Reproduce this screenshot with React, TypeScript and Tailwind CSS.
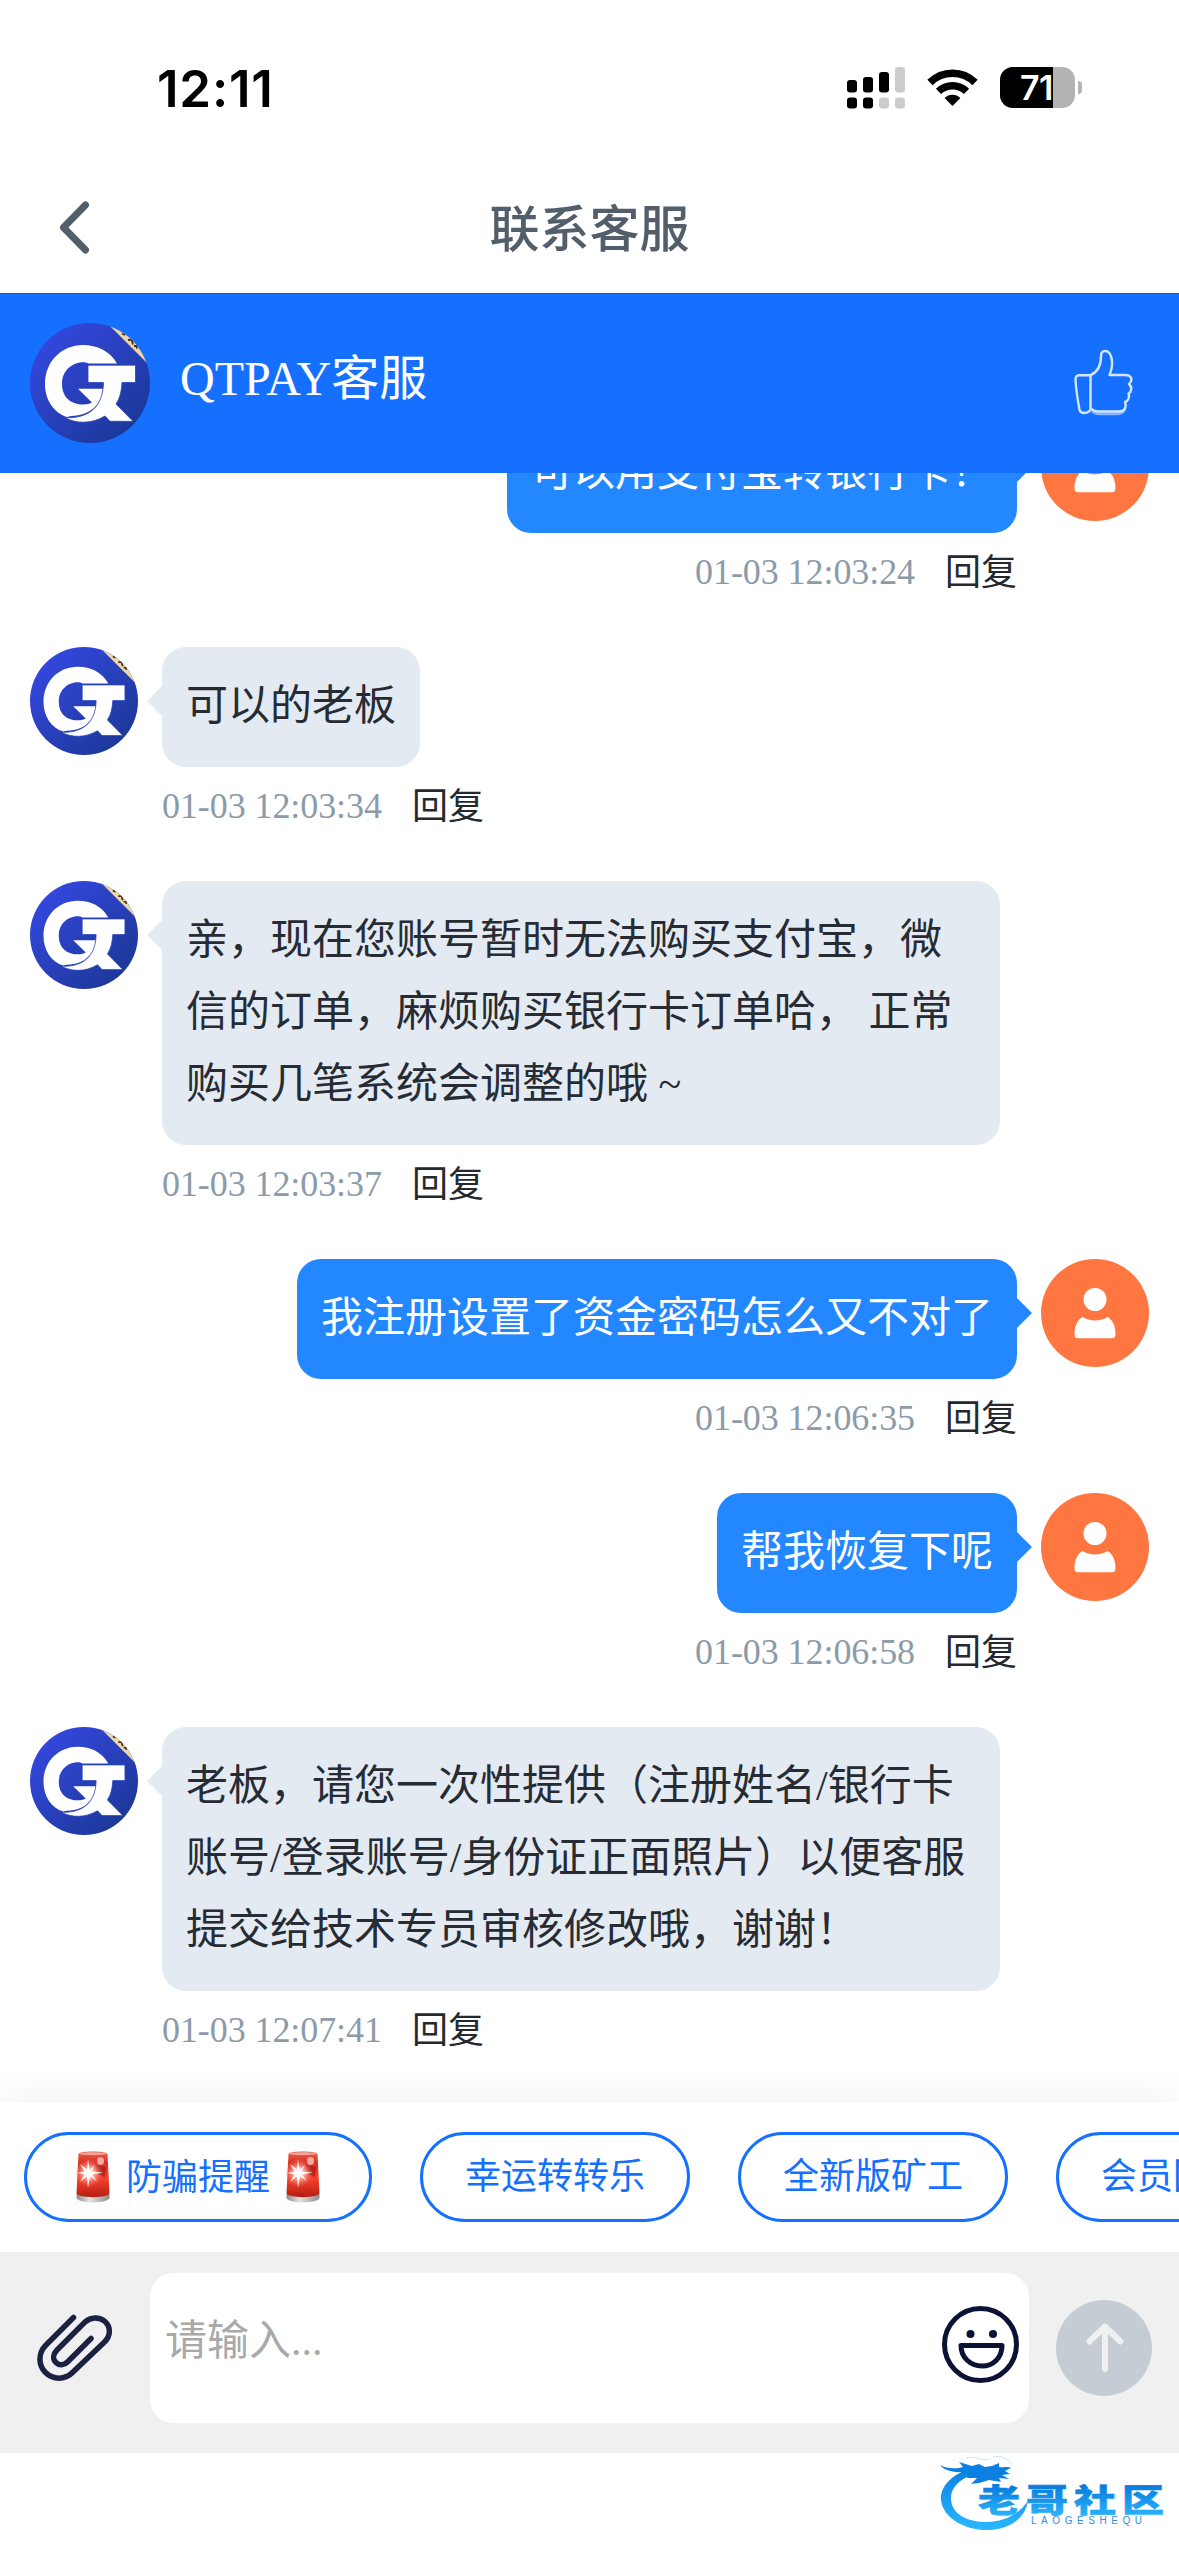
import React from "react";

const SERIF = "font-['Liberation_Serif','Noto_Sans_CJK_SC',serif]";

function SignalIcon() {
  return (
    <svg width="58" height="42" viewBox="0 0 58 42">
      <g fill="#000">
        <rect x="0" y="13" width="10" height="12.5" rx="3" />
        <rect x="16" y="10" width="10" height="15.5" rx="3" />
        <rect x="32" y="5" width="10" height="20.5" rx="3" />
        <rect x="0" y="30.5" width="10" height="11" rx="3" />
        <rect x="16" y="30.5" width="10" height="11" rx="3" />
      </g>
      <g fill="#cccccc">
        <rect x="48" y="0" width="10" height="25.5" rx="3" />
        <rect x="32" y="30.5" width="10" height="11" rx="3" />
        <rect x="48" y="30.5" width="10" height="11" rx="3" />
      </g>
    </svg>
  );
}

function WifiIcon() {
  return (
    <svg width="51" height="38" viewBox="0 0 51 38" fill="none">
      <path d="M3 13.5 A32 32 0 0 1 48 13.500" stroke="#000" strokeWidth="7.600" />
      <path d="M11.500 22.400 A20 20 0 0 1 39.500 22.400" stroke="#000" strokeWidth="7.400" />
      <path d="M25.500 37 L17.600 29 A11 11 0 0 1 33.400 29 Z" fill="#000" />
    </svg>
  );
}

function Battery() {
  return (
    <div className="flex items-center gap-[3px]">
      <div className="flex h-[41px] w-[75px] overflow-hidden rounded-[13px] bg-[#b3b3b3]">
        <div className="flex w-[53px] items-center justify-end bg-black font-['Inter',sans-serif] text-[34px] leading-none font-semibold tracking-[-0.5px] text-white">
          71
        </div>
      </div>
      <div className="h-[13px] w-[4px] rounded-r-full bg-[#b3b3b3]" />
    </div>
  );
}

function BrandAvatar({ id, className }: { id: string; className: string }) {
  return (
    <svg viewBox="0 0 120 120" className={className}>
      <defs>
        <linearGradient id={id + "g"} x1="0.1" y1="0.1" x2="0.85" y2="0.9">
          <stop offset="0" stopColor="#3448e0" />
          <stop offset="1" stopColor="#1c3898" />
        </linearGradient>
        <clipPath id={id + "c"}>
          <circle cx="60" cy="60" r="60" />
        </clipPath>
      </defs>
      <g clipPath={`url(#${id}c)`}>
        <rect width="120" height="120" fill={`url(#${id}g)`} />
        <path d="M80 3 L117 40 L122 38 L110 0 L80 -4 Z" fill="#ecd6a4" />
        <path d="M92 10.500 l3 1.500 M98 17 l3.500 -0.500 l1.500 5 M104 23 l2.500 0 l0.500 2.500" stroke="#4a2d16" strokeWidth="1.800" fill="none" />
        <path
          d="M87 40.500 H58.500 C51 36.500 32 42 32 61 C32 75 42 81.500 53 81.500 C57 81.500 60 80.500 62 79.500 L48 65.800 H73 C72 80 62 92.500 41 93 L37 94 C24 90 15 77 15 61 C15 38 32 22 53 22 C67 22 80 28 87 40.500 Z"
          fill="#fff"
        />
        <path
          d="M58 42.200 H105.500 V59.500 H92 C91.500 68 90 75 86 81 L103 98.300 H80 L75 93 C61 101.500 46 100.500 35 94.800 C59 95.500 73 84 73.500 59.500 H58 Z"
          fill="#fff"
          stroke="#2841be"
          strokeWidth="0.800"
        />
      </g>
    </svg>
  );
}

function UserAvatar() {
  return (
    <svg viewBox="0 0 108 108" className="h-[108px] w-[108px] shrink-0">
      <circle cx="54" cy="54" r="54" fill="#ff7640" />
      <circle cx="54" cy="40.500" r="11.500" fill="#fff" />
      <path
        d="M41.500 58 C48 62.500 60 62.500 66.500 58 C72 61 74.500 68 74.500 75 C74.500 78 73.500 79.300 71 79.300 H37 C34.500 79.300 33.500 78 33.500 75 C33.500 68 36 61 41.500 58 Z"
        fill="#fff"
      />
    </svg>
  );
}

function ThumbIcon() {
  return (
    <svg width="60" height="68" viewBox="0 0 60 68" fill="none" stroke="#d5e5ff" strokeWidth="2.400" strokeLinejoin="round">
      <path d="M17.500 61 C14 65 8 65 6.500 61 C4.500 50 3 40 2.500 31 C2.500 27 4 26.200 6 26.200 H17.500 V61" />
      <path d="M17.500 26.200 C25 23 28 17 28 7 C28 0.500 35 0.500 37.500 6 C40 12 39.500 19 36.500 26 H52 C59 26 60 31 56 35 C59.500 38 58.500 43 55.500 44.500 C57 48 55 52 52 53 C54 59 51 62.500 46 62.500 H26 C21 62.500 19 61 17.500 59" />
      <path d="M19 62 C21 64.500 23 65 26 65 H43 C48 65 51 63 52 60" opacity="0.600" />
    </svg>
  );
}

function Meta({ time }: { time: string }) {
  return (
    <div className="flex h-[78px] items-center gap-[30px] text-[36px] leading-none">
      <span className="tracking-[-0.08px] text-[#8c9ba9]">{time}</span>
      <span className="pt-[2px] text-[#23292f]">回复</span>
    </div>
  );
}

function Lines({ lines }: { lines: string[] }) {
  return (
    <div className="-mt-px mb-px">
      {lines.map((l) => (
        <p key={l} className="h-[72px] whitespace-pre leading-[72px]">
          {l}
        </p>
      ))}
    </div>
  );
}

function Agent({ id, lines, time, wide }: { id: string; lines: string[]; time: string; wide?: boolean }) {
  return (
    <div className="flex shrink-0 items-start gap-6 px-[30px]">
      <BrandAvatar id={id} className="h-[108px] w-[108px] shrink-0" />
      <div className="flex flex-col items-start">
        <div className={"relative rounded-[24px] bg-[#e3eaf2] p-6 text-[42px] text-[#262b34] " + (wide ? "w-[838px]" : "")}>
          <svg className="absolute top-[39px] -left-[15px]" width="16" height="30" viewBox="0 0 16 30">
            <path d="M16 0 H15 L0 15 L15 30 H16 Z" fill="#e3eaf2" />
          </svg>
          <Lines lines={lines} />
        </div>
        <Meta time={time} />
      </div>
    </div>
  );
}

function Mine({ text, time }: { text: string; time: string }) {
  return (
    <div className="flex shrink-0 items-start justify-end gap-6 px-[30px]">
      <div className="flex flex-col items-end">
        <div className="relative rounded-[24px] bg-[#2388ff] p-6 text-[42px] text-white">
          <svg className="absolute top-[39px] -right-[15px]" width="16" height="30" viewBox="0 0 16 30">
            <path d="M0 0 H1 L16 15 L1 30 H0 Z" fill="#2388ff" />
          </svg>
          <Lines lines={[text]} />
        </div>
        <Meta time={time} />
      </div>
      <UserAvatar />
    </div>
  );
}

function Siren({ id }: { id: string }) {
  return (
    <svg width="48" height="54" viewBox="0 0 48 54">
      <defs>
        <linearGradient id={id} x1="0" y1="0" x2="0" y2="1">
          <stop offset="0" stopColor="#e8604c" />
          <stop offset="0.250" stopColor="#dc2f22" />
          <stop offset="0.600" stopColor="#f4412f" />
          <stop offset="1" stopColor="#b51c12" />
        </linearGradient>
        <linearGradient id={id + "b"} x1="0" y1="0" x2="1" y2="0">
          <stop offset="0" stopColor="#8e8a88" />
          <stop offset="0.400" stopColor="#e4e2e0" />
          <stop offset="1" stopColor="#8e8a88" />
        </linearGradient>
        <radialGradient id={id + "r"}>
          <stop offset="0" stopColor="#fff" />
          <stop offset="0.350" stopColor="#ffc4ba" stopOpacity="0.900" />
          <stop offset="1" stopColor="#ff6a58" stopOpacity="0" />
        </radialGradient>
      </defs>
      <path d="M7.500 44 V47.500 C8 54 40 54 40.500 47.500 V44 Z" fill={`url(#${id}b)`} />
      <path d="M9.500 4 C9.500 0.500 38.500 0.500 38.500 4 L40.500 43 C40.500 48.500 7.500 48.500 7.500 43 Z" fill={`url(#${id})`} />
      <path d="M10 4 C12 1.500 36 1.500 38 4 C34 5.500 14 5.500 10 4 Z" fill="#f0a79b" />
      <path d="M26 14 L37 17 L36 27 L28 24 Z" fill="#9c1a12" opacity="0.650" />
      <ellipse cx="31.500" cy="11" rx="3.500" ry="4" fill="#f6a89e" />
      <circle cx="20" cy="23" r="14" fill={`url(#${id}r)`} />
      <path
        d="M19 9 L20.600 19.500 L26 15 L22.500 21.500 L34 22.500 L23 24.500 L28 31 L21 26.500 L19 38 L17.800 26.500 L11 32 L15.500 24.500 L8 23 L15.500 21.500 L11 14 L18 19.500 Z"
        fill="#fff"
        opacity="0.900"
      />
    </svg>
  );
}

function Chip({ children }: { children: React.ReactNode }) {
  return (
    <div className="flex h-[90px] shrink-0 items-center gap-[9px] rounded-full border-[3px] border-[#1570ff] px-[42px] text-[36px] leading-none whitespace-nowrap text-[#1570ff]">
      {children}
    </div>
  );
}

function ClipIcon() {
  return (
    <svg width="76" height="69" viewBox="0 0 76 69" fill="none" stroke="#1c2142" strokeWidth="5.500" strokeLinecap="round">
      <path d="M36.500 4.500 L9 32 C1 40 1 52 8.500 59.500 C16 67 28 67 35.500 59.500 L67 29.500 C74 23 74 14 68 8.500 C62 3.500 53.500 4 48 9 L20 37 C16 41 15.500 46 19 49.500 C22.500 53 27 52.500 31 48.500 L54 25.500" />
    </svg>
  );
}

function SmileIcon() {
  return (
    <svg width="78" height="78" viewBox="0 0 78 78" fill="none" stroke="#0c1233" strokeWidth="5">
      <circle cx="38.500" cy="38.500" r="36" />
      <path d="M19 39.500 H60 C60 52 51 60 40 60 C28.500 60 19 51.500 19 39.500 Z" strokeLinejoin="round" />
      <circle cx="28.500" cy="28" r="4" fill="#0c1233" stroke="none" />
      <circle cx="51" cy="28" r="4" fill="#0c1233" stroke="none" />
    </svg>
  );
}

function SendIcon() {
  return (
    <svg width="96" height="96" viewBox="0 0 96 96" fill="none">
      <circle cx="48" cy="48" r="48" fill="#c5ccd4" />
      <path d="M49 69 V26.500 M33.500 41.500 L49 26.500 L64.500 41.500" stroke="#f0f0f0" strokeWidth="6" strokeLinecap="round" strokeLinejoin="round" />
    </svg>
  );
}

function CommunityLogo() {
  return (
    <svg width="228" height="84" viewBox="0 0 228 84">
      <defs>
        <linearGradient id="ring" x1="0" y1="0" x2="0" y2="1">
          <stop offset="0" stopColor="#0a7fe0" />
          <stop offset="1" stopColor="#2ab8ff" />
        </linearGradient>
        <linearGradient id="word" x1="0" y1="0" x2="0" y2="1">
          <stop offset="0.200" stopColor="#0778dc" />
          <stop offset="0.900" stopColor="#2ab4fb" />
        </linearGradient>
      </defs>
      <path
        d="M34 15 C12 21 1 34 2 47 C4 66 28 78 50 77 C70 76 86 66 89 48 C79 62 64 69 48 69 C28 69 12 61 12 45 C12 34 22 24 40 20 Z"
        fill="url(#ring)"
      />
      <path
        d="M1 12 C8 16 18 16 24 14 L20 9 L33 13 L40 11 L46 14 L53 13 L60 10 L60 14 C66 15 68 13 72 15 L66 18 L71 21 L63 22 L70 26 L60 25 L62 29 L50 27 L40 30 L32 31 L38 25 L28 25 L30 19 C20 20 6 19 1 12 Z"
        fill="#0b80e2"
      />
      <path d="M27 5 C38 3 42 8 50 6 M54 4 C62 2 70 6 73 12" stroke="#b5d8f5" strokeWidth="0.700" fill="none" />
      <text
        x="0"
        y="0"
        transform="translate(39 58.500) scale(1 0.760)"
        fontFamily="'Noto Sans CJK SC', sans-serif"
        fontWeight="900"
        fontSize="42"
        textLength="186"
        fill="url(#word)"
        stroke="url(#word)"
        strokeWidth="0.800"
      >
        老哥社区
      </text>
      <text x="92" y="70.800" fontFamily="'Liberation Sans', sans-serif" fontSize="10" textLength="111" fill="#2f8fe0">
        LAOGESHEQU
      </text>
    </svg>
  );
}

export default function App() {
  return (
    <div className={"flex h-[2556px] w-[1179px] flex-col overflow-hidden bg-white " + SERIF}>
      <div className="flex h-[175px] shrink-0 items-center justify-between pr-[97px] pl-[157px]">
        <span className="pt-px font-['Inter',sans-serif] text-[51px] leading-none font-semibold tracking-[0.8px]">12:11</span>
        <div className="flex items-center gap-[22px]">
          <SignalIcon />
          <WifiIcon />
          <Battery />
        </div>
      </div>

      <div className="grid h-[118px] shrink-0 grid-cols-[1fr_auto_1fr] items-center px-[58px] pb-[12px]">
        <svg width="32" height="54" viewBox="0 0 32 54" fill="none">
          <path d="M27.500 4 L5.500 26.500 L27.500 49" stroke="#535e6b" strokeWidth="7" strokeLinecap="round" strokeLinejoin="round" />
        </svg>
        <h1 className="-mt-[6px] font-['Noto_Sans_CJK_SC',sans-serif] text-[50px] leading-none font-medium text-[#535e6b]">联系客服</h1>
        <span />
      </div>

      <header className="flex h-[180px] shrink-0 items-center bg-[#1570ff] pr-[46px] pl-[30px] shadow-[inset_0_1px_0_#1a55b8]">
        <BrandAvatar id="head" className="h-[120px] w-[120px]" />
        <span className="-mt-[8px] ml-[30px] grow text-[48px] leading-none text-white">QTPAY客服</span>
        <ThumbIcon />
      </header>

      <main className="flex h-[1629px] shrink-0 flex-col justify-end gap-9 overflow-hidden pb-[33px]">
        <Mine text="可以用支付宝转银行卡！" time="01-03 12:03:24" />
        <Agent id="a1" lines={["可以的老板"]} time="01-03 12:03:34" />
        <Agent
          id="a2"
          wide
          lines={["亲，现在您账号暂时无法购买支付宝，微", "信的订单，麻烦购买银行卡订单哈， 正常", "购买几笔系统会调整的哦 ~"]}
          time="01-03 12:03:37"
        />
        <Mine text="我注册设置了资金密码怎么又不对了" time="01-03 12:06:35" />
        <Mine text="帮我恢复下呢" time="01-03 12:06:58" />
        <Agent
          id="a3"
          wide
          lines={["老板，请您一次性提供（注册姓名/银行卡", "账号/登录账号/身份证正面照片）以便客服", "提交给技术专员审核修改哦，谢谢！"]}
          time="01-03 12:07:41"
        />
      </main>

      <div className="relative z-10 flex h-[150px] shrink-0 items-center gap-12 bg-white pl-6 shadow-[0_0_40px_rgba(0,0,0,0.07)]">
        <Chip>
          <Siren id="s1" />
          <span className="pt-px">防骗提醒</span>
          <Siren id="s2" />
        </Chip>
        <Chip>幸运转转乐</Chip>
        <Chip>全新版矿工</Chip>
        <Chip>会员回馈</Chip>
      </div>

      <div className="relative z-20 flex h-[201px] shrink-0 bg-[#f0f0f0] pt-[21px] pr-[27px] pl-[37px]">
        <div className="w-[113px] pt-[40px]">
          <ClipIcon />
        </div>
        <div className="flex h-[150px] w-[879px] justify-between rounded-[24px] bg-white pr-[9px] pl-[15px]">
          <span className="pt-[47px] text-[42px] leading-none text-[#a9a9a9]">请输入...</span>
          <div className="pt-[33px]">
            <SmileIcon />
          </div>
        </div>
        <div className="ml-[27px] pt-[27px]">
          <SendIcon />
        </div>
      </div>

      <div className="relative z-20 flex grow items-start justify-end bg-white pr-[12px]">
        <CommunityLogo />
      </div>
    </div>
  );
}
